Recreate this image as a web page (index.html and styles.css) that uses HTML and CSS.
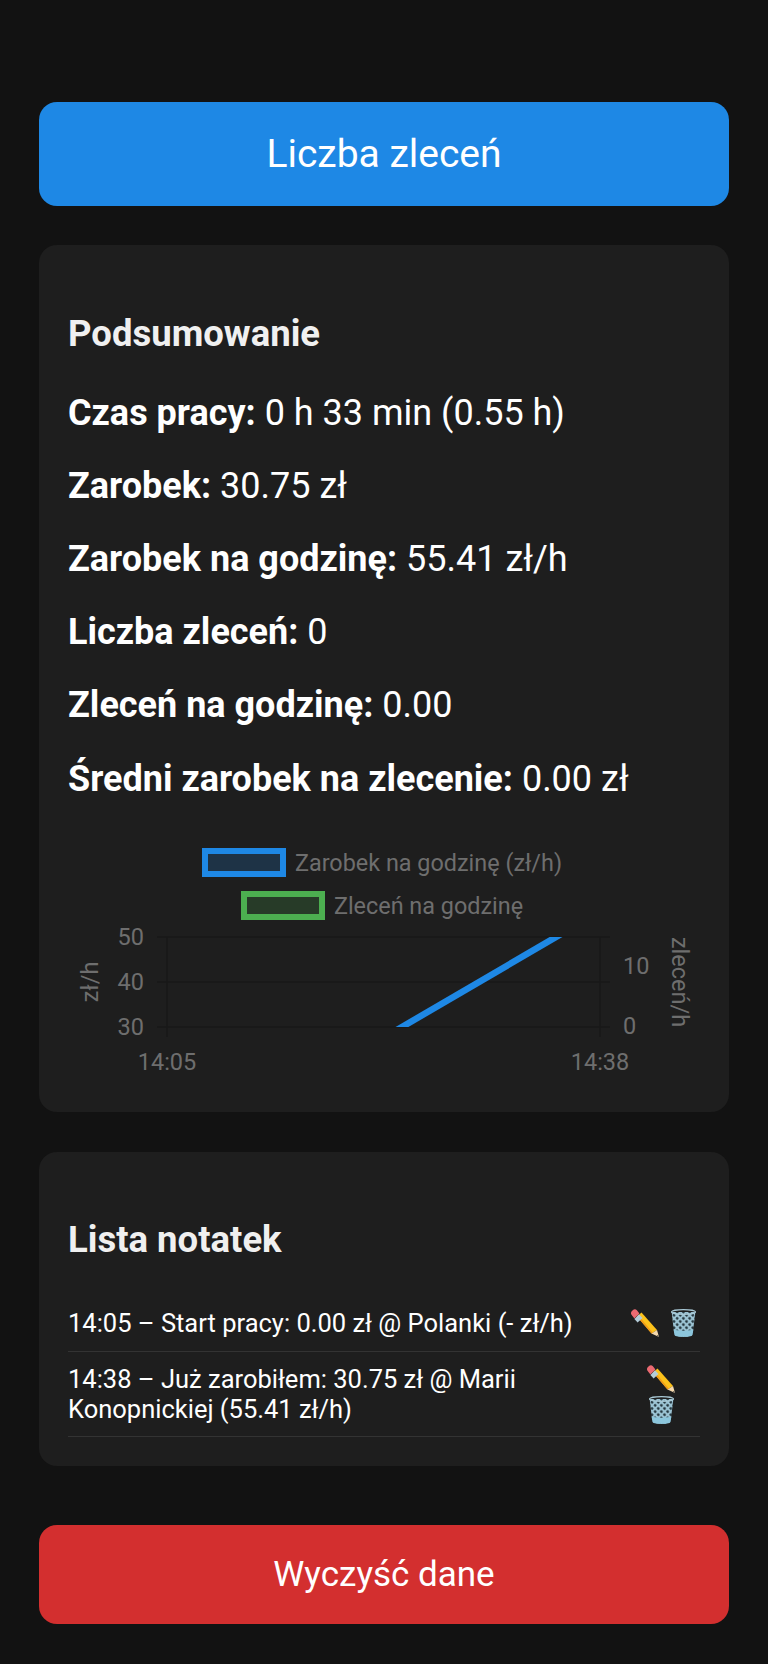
FILE: index.html
```html
<!DOCTYPE html>
<html lang="pl">
  <head>
    <meta charset="UTF-8" />
    <meta name="viewport" content="width=device-width, initial-scale=1.0" />
    <title>Podsumowanie</title>
    <link rel="stylesheet" href="styles.css">
  </head>
  <body>
    <svg class="defs" width="0" height="0" aria-hidden="true">
      <defs>
        <pattern id="mesh" width="4.4" height="4.4" patternUnits="userSpaceOnUse" patternTransform="rotate(45)">
          <rect width="4.4" height="4.4" fill="#9cc4d4" />
          <circle cx="2.2" cy="2.2" r="1.4" fill="#24363e" />
        </pattern>
        <clipPath id="plot-clip">
          <rect x="128" y="0" width="433" height="90" />
        </clipPath>
        <symbol id="icon-pencil" viewBox="0 0 28 28">
          <path d="M6 7.5 L10.5 3.5 L26 21 L20.5 24.5 Z" fill="#fcc21b" />
          <path d="M6 7.5 L7.3 6.3 L21.8 23.7 L20.5 24.5 Z" fill="#f09a1a" />
          <path d="M20.5 24.5 L26 21 L28 28 Z" fill="#f6d9ad" />
          <path d="M25.9 26.6 L26.9 26 L28 28 Z" fill="#3a3a3a" />
          <path d="M3.4 9.9 L8 5.3 L11.5 9 L6.6 13.4 Z" fill="#b4ccd8" />
          <path d="M0.7 6 C-0.4 4.6 -0.2 3 1 1.9 L2 1 C3.2 0 4.8 0.1 5.9 1.2 L8.4 4.4 L3.4 9.6 Z" fill="#ec6a72" />
        </symbol>
        <symbol id="icon-trash" viewBox="0 0 25 28">
          <path d="M0.6 3 L3.4 25.6 C3.6 27 7 28 12.5 28 C18 28 21.4 27 21.6 25.6 L24.4 3 Z" fill="url(#mesh)" />
          <path d="M2.6 20.5 C6 22 19 22 22.4 20.5 L21.6 25.6 C21.4 27 18 28 12.5 28 C7 28 3.6 27 3.4 25.6 Z" fill="#8cc6dc" />
          <ellipse cx="12.5" cy="3" rx="12" ry="2.4" fill="none" stroke="#a9c9d6" stroke-width="1.2" />
        </symbol>
      </defs>
    </svg>

    <button class="btn btn-blue">Liczba zleceń</button>

    <section class="card summary">
      <h2>Podsumowanie</h2>
      <p><strong>Czas pracy:</strong> 0 h 33 min (0.55 h)</p>
      <p><strong>Zarobek:</strong> 30.75 zł</p>
      <p><strong>Zarobek na godzinę:</strong> 55.41 zł/h</p>
      <p><strong>Liczba zleceń:</strong> 0</p>
      <p><strong>Zleceń na godzinę:</strong> 0.00</p>
      <p><strong>Średni zarobek na zlecenie:</strong> 0.00 zł</p>

      <div class="chart">
        <div class="legend-item">
          <span class="swatch swatch-blue"></span>
          <span>Zarobek na godzinę (zł/h)</span>
        </div>
        <div class="legend-item">
          <span class="swatch swatch-green"></span>
          <span>Zleceń na godzinę</span>
        </div>
        <svg class="plot" width="690" height="160" viewBox="0 -17 690 160">
          <g class="grid">
            <line x1="118" y1="0" x2="571" y2="0" />
            <line x1="118" y1="45" x2="571" y2="45" />
            <line x1="118" y1="90" x2="571" y2="90" />
            <line x1="128" y1="0" x2="128" y2="100" />
            <line x1="561" y1="0" x2="561" y2="100" />
          </g>
          <line class="series" x1="354.4" y1="95" x2="525.6" y2="-5" clip-path="url(#plot-clip)" />
          <g class="ticks">
            <text x="105" y="8" text-anchor="end">50</text>
            <text x="105" y="53" text-anchor="end">40</text>
            <text x="105" y="98" text-anchor="end">30</text>
            <text x="584" y="37">10</text>
            <text x="584" y="97">0</text>
            <text x="128" y="133" text-anchor="middle">14:05</text>
            <text x="561" y="133" text-anchor="middle">14:38</text>
            <text transform="translate(59 45) rotate(-90)" text-anchor="middle">zł/h</text>
            <text transform="translate(633 45) rotate(90)" text-anchor="middle">zleceń/h</text>
          </g>
        </svg>
      </div>
    </section>

    <section class="card notes">
      <h2>Lista notatek</h2>
      <ul class="note-list">
        <li class="note">
          <span class="note-text">14:05 – Start pracy: 0.00 zł @ Polanki (- zł/h)</span>
          <span class="note-actions">
            <svg class="icon-pencil"><use href="#icon-pencil" /></svg>
            <svg class="icon-trash"><use href="#icon-trash" /></svg>
          </span>
        </li>
        <li class="note">
          <span class="note-text">14:38 – Już zarobiłem: 30.75 zł @ Marii Konopnickiej (55.41 zł/h)</span>
          <span class="note-actions stacked">
            <svg class="icon-pencil"><use href="#icon-pencil" /></svg>
            <svg class="icon-trash"><use href="#icon-trash" /></svg>
          </span>
        </li>
      </ul>
    </section>

    <button class="btn btn-red">Wyczyść dane</button>
  </body>
</html>
```

FILE: styles.css
```css
* {
  box-sizing: border-box;
  margin: 0;
  padding: 0;
}
body {
  background-color: #121212;
  color: #fff;
  font-family: Roboto, "Liberation Sans", sans-serif;
  padding: 102px 39px 30px;
}
.defs {
  position: absolute;
}
.btn {
  display: block;
  width: 100%;
  border: none;
  border-radius: 18px;
  color: #fff;
  font-family: inherit;
}
.btn-blue {
  background-color: #1e88e5;
  font-size: 39px;
  height: 104px;
}
.btn-red {
  background-color: #d32f2f;
  font-size: 35px;
  height: 99px;
  margin-top: 59px;
}
.card {
  background-color: #1e1e1e;
  border-radius: 18px;
  padding: 0 29px;
}
.card h2 {
  color: #f0f0f0;
  font-size: 36.5px;
  font-weight: 700;
  line-height: 41px;
}
.summary {
  margin-top: 39px;
  height: 867px;
  padding-top: 68px;
}
.summary h2 {
  margin-bottom: 22px;
}
.summary p {
  font-size: 36px;
  line-height: 42px;
  padding: 15.6px 0;
}
.summary p strong {
  font-weight: 700;
}
.chart {
  margin: 33px -29px 0;
  color: #6e6e6e;
  font-size: 23.4px;
}
.legend-item {
  display: flex;
  justify-content: center;
  align-items: center;
  gap: 9px;
  height: 29px;
  padding-right: 4px;
}
.legend-item + .legend-item {
  margin-top: 14px;
}
.swatch {
  width: 84px;
  height: 29px;
  border: 6px solid;
}
.swatch-blue {
  border-color: #1e88e5;
  background-color: rgba(30, 136, 229, 0.2);
}
.swatch-green {
  border-color: #4caf50;
  background-color: rgba(76, 175, 80, 0.2);
}
.plot {
  display: block;
  overflow: visible;
}
.grid line {
  stroke: #191919;
  stroke-width: 1.5;
}
.series {
  stroke: #1e88e5;
  stroke-width: 6.5;
}
.ticks text {
  fill: #6e6e6e;
  font-size: 23.5px;
  font-family: Roboto, "Liberation Sans", sans-serif;
}
.notes {
  margin-top: 40px;
  height: 314px;
  padding-top: 67px;
}
.notes h2 {
  margin-bottom: 34px;
}
.note-list {
  list-style: none;
}
.note {
  display: flex;
  justify-content: space-between;
  align-items: center;
  gap: 16px;
  min-height: 58px;
  border-bottom: 1.5px solid #333;
  font-size: 25.5px;
  line-height: 30px;
  padding: 12px 4px 12px 0;
}
.note-actions {
  display: flex;
  gap: 12px;
  flex-shrink: 0;
  align-items: center;
}
.note-actions.stacked {
  flex-direction: column;
  gap: 3px;
  margin-right: 21px;
}
.icon-pencil {
  width: 28px;
  height: 28px;
}
.icon-trash {
  width: 25px;
  height: 28px;
}
```
